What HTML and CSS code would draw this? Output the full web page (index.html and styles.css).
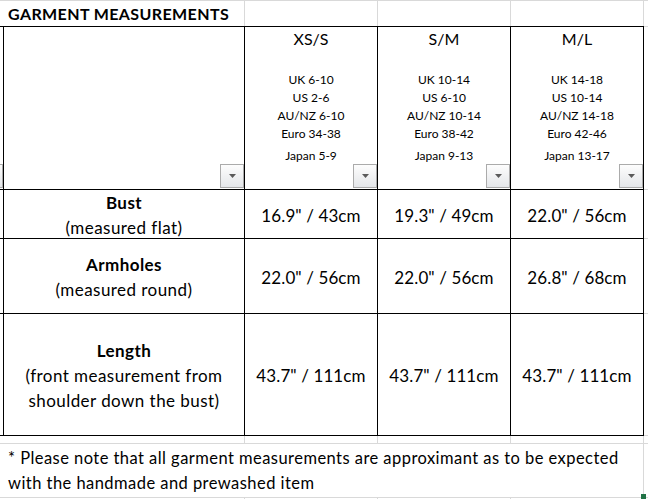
FILE: index.html
```html
<!DOCTYPE html>
<html>
<head>
<meta charset="utf-8">
<link rel="stylesheet" href="styles.css">
</head>
<body>
<div class="sheet">
  <div class="title-row">
    <div class="cell title">GARMENT MEASUREMENTS</div>
    <div class="cell"></div>
    <div class="cell"></div>
    <div class="cell"></div>
    <div class="cell"></div>
  </div>

  <div class="table-wrap">
    <div class="grid">
      <div class="stub"><span class="filter"><svg width="7" height="4" viewBox="0 0 7 4"><path d="M0 0H7L3.5 4Z"/></svg></span></div>
      <div class="hcell"><span class="filter"><svg width="7" height="4" viewBox="0 0 7 4"><path d="M0 0H7L3.5 4Z"/></svg></span></div>
      <div class="hcell">
        <div class="size">XS/S</div>
        <div class="conv">
          <div>UK 6-10</div>
          <div>US 2-6</div>
          <div>AU/NZ 6-10</div>
          <div>Euro 34-38</div>
        </div>
        <div class="japan">Japan 5-9</div>
        <span class="filter"><svg width="7" height="4" viewBox="0 0 7 4"><path d="M0 0H7L3.5 4Z"/></svg></span>
      </div>
      <div class="hcell">
        <div class="size">S/M</div>
        <div class="conv">
          <div>UK 10-14</div>
          <div>US 6-10</div>
          <div>AU/NZ 10-14</div>
          <div>Euro 38-42</div>
        </div>
        <div class="japan">Japan 9-13</div>
        <span class="filter"><svg width="7" height="4" viewBox="0 0 7 4"><path d="M0 0H7L3.5 4Z"/></svg></span>
      </div>
      <div class="hcell">
        <div class="size">M/L</div>
        <div class="conv">
          <div>UK 14-18</div>
          <div>US 10-14</div>
          <div>AU/NZ 14-18</div>
          <div>Euro 42-46</div>
        </div>
        <div class="japan">Japan 13-17</div>
        <span class="filter"><svg width="7" height="4" viewBox="0 0 7 4"><path d="M0 0H7L3.5 4Z"/></svg></span>
      </div>

      <div class="stub"></div>
      <div class="label"><b>Bust</b><span>(measured flat)</span></div>
      <div class="val">16.9" / 43cm</div>
      <div class="val">19.3" / 49cm</div>
      <div class="val">22.0" / 56cm</div>

      <div class="stub"></div>
      <div class="label"><b>Armholes</b><span>(measured round)</span></div>
      <div class="val">22.0" / 56cm</div>
      <div class="val">22.0" / 56cm</div>
      <div class="val">26.8" / 68cm</div>

      <div class="stub"></div>
      <div class="label"><b>Length</b><span>(front measurement from</span><span>shoulder down the bust)</span></div>
      <div class="val">43.7" / 111cm</div>
      <div class="val">43.7" / 111cm</div>
      <div class="val">43.7" / 111cm</div>
    </div>
    <div class="filler">
      <div></div><div></div><div></div><div></div>
    </div>
  </div>

  <div class="foot">
    <div class="cell"></div><div class="cell"></div><div class="cell"></div><div class="cell"></div><div class="cell"></div>
    <div class="cell note">* Please note that all garment measurements are approximant as to be expected<br>with the handmade and prewashed item</div>
    <div class="cell"></div>
    <div class="cell"></div><div class="cell"></div><div class="cell"></div><div class="cell"></div><div class="cell"></div>
  </div>
  <span class="handle"></span>
</div>
</body>
</html>
```

FILE: styles.css
```css
html, body {
  margin: 0;
  padding: 0;
  background: #fff;
}
body {
  width: 648px;
  height: 499px;
  overflow: hidden;
  font-family: Lato, "Open Sans", sans-serif;
  color: #000;
}
.sheet {
  position: relative;
  width: 648px;
  height: 499px;
}
.cell {
  background: #fff;
}

/* title row */
.title-row {
  display: grid;
  grid-template-columns: 244px 132px 132px 132px 4px;
  grid-template-rows: 25px;
  column-gap: 1px;
  padding-top: 1px;
  background: #d9d9d9;
}
.title {
  padding-left: 8px;
  font-weight: 700;
  font-size: 16px;
  letter-spacing: 0.4px;
  line-height: 25px;
  white-space: nowrap;
}

/* main table */
.table-wrap {
  display: flex;
}
.grid {
  display: grid;
  grid-template-columns: 3px 240px 132px 132px 132px;
  grid-template-rows: 162px 48px 74px 121px;
  gap: 1px;
  padding: 1px 1px 1px 0;
  background: #000;
}
.grid > div {
  background: #fff;
  position: relative;
}
.stub {
  overflow: hidden;
}
.hcell {
  text-align: center;
  padding-top: 2px;
}
.size {
  font-size: 16px;
  line-height: 20px;
}
.conv {
  margin-top: 22px;
  font-size: 12px;
  line-height: 18px;
}
.japan {
  margin-top: 4px;
  font-size: 12px;
  line-height: 18px;
}
.filter {
  position: absolute;
  right: 0;
  bottom: 1px;
  width: 24px;
  height: 24px;
  box-sizing: border-box;
  border: 1px solid #ababab;
  background: linear-gradient(#fdfdfd, #e4e6e9);
  display: flex;
  align-items: center;
  justify-content: center;
}
.filter svg {
  display: block;
  fill: #5a5a5a;
}
.label {
  display: flex;
  flex-direction: column;
  justify-content: center;
  align-items: center;
  text-align: center;
  font-size: 17px;
  letter-spacing: 0.45px;
  line-height: 25px;
  padding-top: 2px;
}
.label b {
  font-weight: 700;
}
.val {
  display: flex;
  justify-content: center;
  align-items: center;
  font-size: 17px;
  letter-spacing: 0.1px;
  line-height: 25px;
  padding-top: 2px;
}

.filler {
  width: 4px;
  display: grid;
  grid-template-rows: 162px 48px 74px 121px;
  gap: 1px;
  padding: 1px 0;
  background: #d9d9d9;
}
.filler > div {
  background: #fff;
}

/* footer rows */
.foot {
  display: grid;
  grid-template-columns: 244px 132px 132px 132px 4px;
  grid-template-rows: 7px 53px 2px;
  gap: 1px;
  background: #d9d9d9;
}
.note {
  grid-column: 1 / 5;
  padding-left: 8px;
  padding-top: 2px;
  font-size: 16.5px;
  letter-spacing: 0.45px;
  line-height: 25px;
  white-space: nowrap;
  overflow: hidden;
}
.handle {
  position: absolute;
  left: 641px;
  top: 494px;
  width: 5px;
  height: 5px;
  background: #217346;
}
```
